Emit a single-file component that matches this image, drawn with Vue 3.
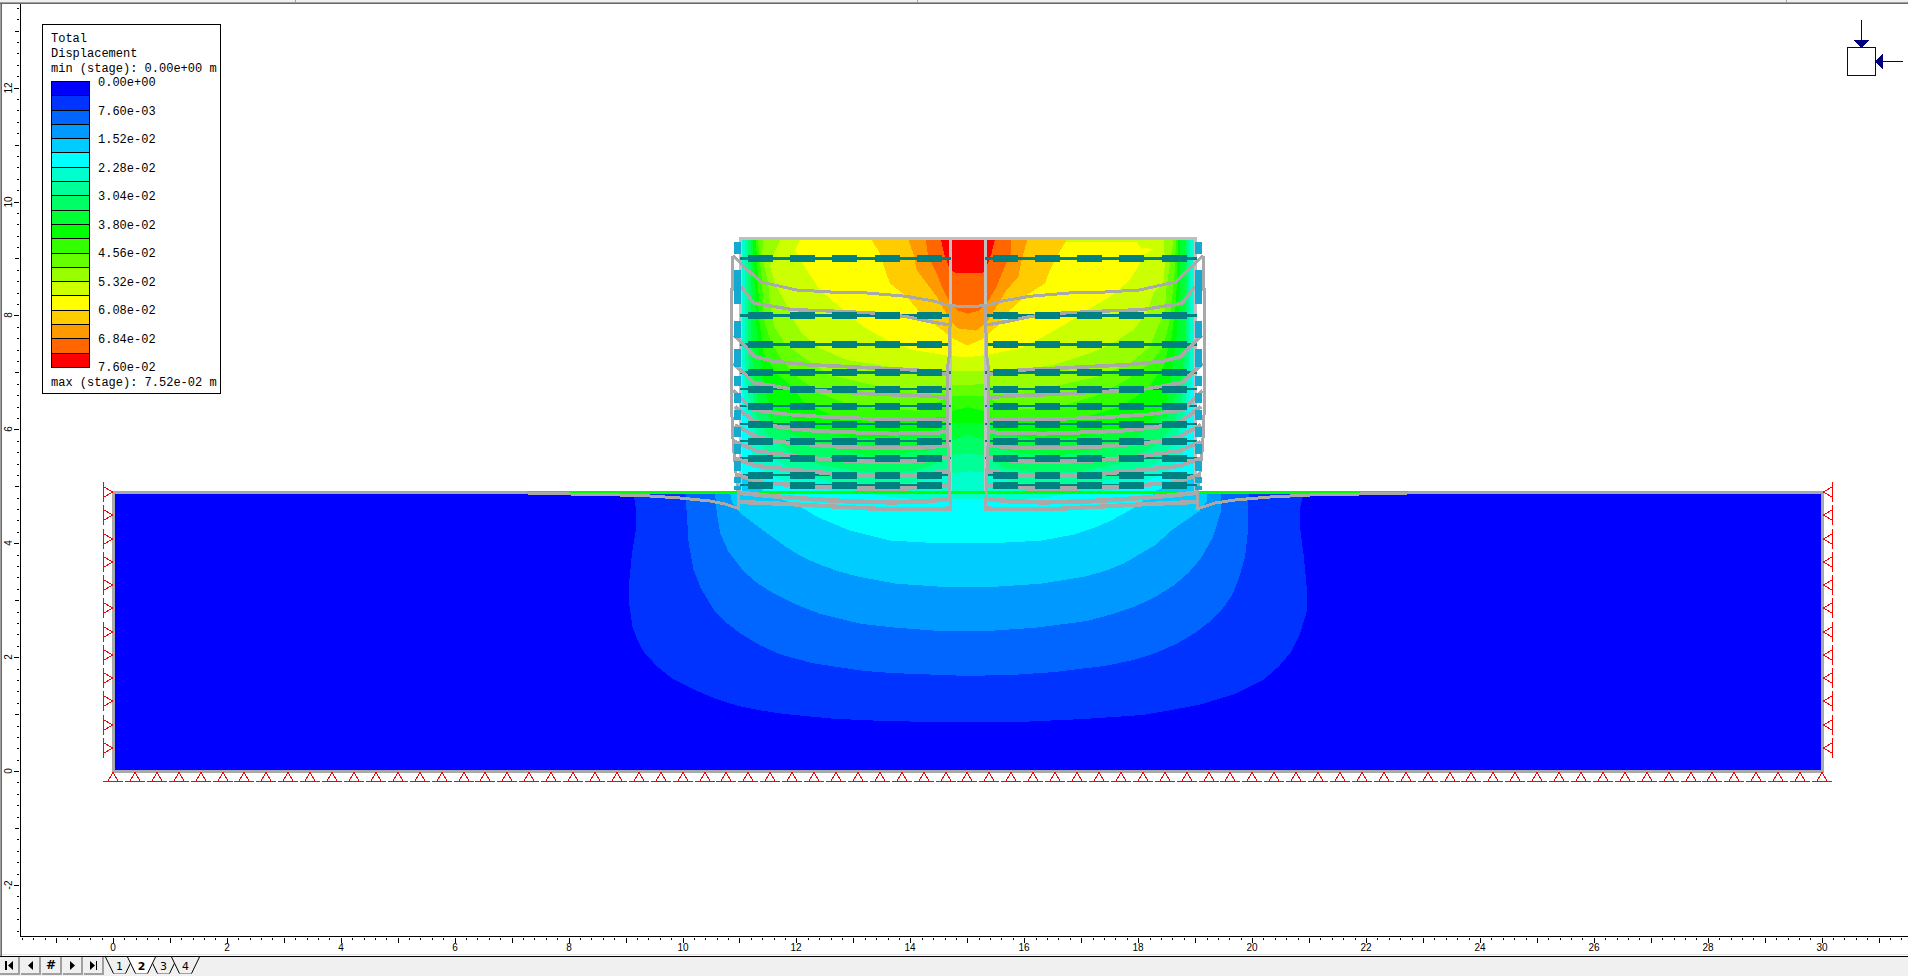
<script setup>
import { ref } from 'vue'

const bands = [
  '#0000ff', '#0033ff', '#0066ff', '#0099ff', '#00ccff', '#00ffff', '#00ffcc',
  '#00ff99', '#00ff66', '#00ff33', '#00ff00', '#33ff00', '#66ff00', '#99ff00',
  '#ccff00', '#ffff00', '#ffcc00', '#ff9900', '#ff6600', '#ff0000'
]
const values = [
  '0.00e+00', '7.60e-03', '1.52e-02', '2.28e-02', '3.04e-02', '3.80e-02',
  '4.56e-02', '5.32e-02', '6.08e-02', '6.84e-02', '7.60e-02'
]

const range = (from, to) => Array.from({ length: to - from + 1 }, (_, i) => from + i)

/* world units to canvas units */
const unit = 56.96
const originX = 113.4
const originY = 771.6
const px = (v) => Math.round(originX + v * unit - 0.5)
const py = (v) => Math.round(originY - v * unit - 0.5)
const ticksX = range(-8, 157).map((k) => ({ k, at: px(k / 5), len: k % 5 ? 2 : 5 }))
const ticksY = range(-14, 67).map((k) => ({ k, at: py(k / 5), len: k % 5 ? 2 : k % 10 ? 4 : 5 }))
const labelsX = range(0, 15).map((n) => n * 2)
const labelsY = range(-1, 6).map((n) => n * 2)

const rollersX = range(0, 78).map((k) => Math.round(113 + k * 21.91))
const rollersY = range(0, 11).map((k) => Math.round(492 + k * 23.27))

/* displacement contours below ground */
const ground = [
  { fill: '#0033ff', pts: '68,67 75,120 74,180 66,250 60,340 60,400 67,470 77,510 90,545 118,590 150,627 200,663 240,687 285,708 330,721 380,732 480,746 570,752 650,755 880,755 1000,747 1120,735 1180,720 1240,703 1310,672 1370,628 1400,590 1425,548 1443,497 1458,425 1458,350 1452,260 1445,180 1445,110 1452,67' },
  { fill: '#0066ff', pts: '176,67 179,130 183,220 193,300 208,355 235,420 262,460 292,493 330,526 375,555 440,580 540,602 600,609 670,613 760,618 860,614 940,606 1045,587 1100,570 1145,550 1190,521 1230,487 1262,450 1288,410 1305,372 1317,330 1331,260 1337,180 1337,90 1340,67' },
  { fill: '#0099ff', pts: '237,67 241,130 248,190 265,245 297,305 325,340 360,372 405,404 455,432 540,462 610,473 700,483 800,483 900,473 1005,453 1058,432 1105,409 1148,379 1185,345 1215,307 1240,265 1265,200 1282,120 1282,67' },
  { fill: '#00ccff', pts: '268,67 272,95 290,130 340,185 385,232 415,259 450,282 490,303 530,319 610,341 700,350 820,350 910,341 1000,320 1042,303 1080,281 1145,226 1180,180 1235,125 1252,95 1252,67' },
  { fill: '#00ffff', pts: '345,67 370,85 398,100 425,120 450,142 480,160 510,179 545,192 600,212 690,219 830,218 910,212 980,193 1015,176 1050,155 1100,115 1130,80 1150,67' }
]

/* displacement contours inside the reinforced wall */
const wall = [
  { fill: '#00ffcc', pts: '66,60 66,400 72,560 85,600 90,680 110,740 180,780 340,812 454,822 520,832 585,837 905,837 980,832 1040,822 1200,810 1340,760 1390,700 1400,600 1420,450 1420,60' },
  { fill: '#00ff99', pts: '75,60 75,400 80,500 95,590 115,660 150,710 250,765 340,785 450,795 560,790 665,770 700,760 744,754 800,757 830,770 900,790 1050,795 1200,775 1310,730 1370,660 1395,560 1410,400 1410,60' },
  { fill: '#00ff66', pts: '83,60 83,400 95,500 110,590 140,640 200,690 300,735 400,752 500,760 600,750 665,725 700,705 744,698 800,708 850,745 960,760 1080,755 1200,730 1300,680 1360,620 1385,540 1403,400 1403,60' },
  { fill: '#00ff33', pts: '92,60 95,400 105,500 120,560 170,620 260,660 350,690 440,705 540,700 640,690 695,662 744,645 795,660 820,680 900,700 1020,705 1150,690 1250,650 1340,590 1380,500 1395,400 1395,60' },
  { fill: '#00ff00', pts: '98,60 102,150 108,300 115,400 125,440 130,500 150,560 230,600 330,640 400,655 520,650 620,640 691,609 796,609 850,640 950,655 1080,650 1200,630 1300,600 1340,540 1365,400 1375,300 1380,200 1380,60' },
  { fill: '#33ff00', pts: '108,60 115,200 118,300 130,400 170,460 215,500 250,545 340,590 450,605 560,600 680,590 700,572 744,562 790,572 820,600 950,605 1100,590 1200,560 1280,510 1330,440 1355,350 1368,250 1372,150 1374,60' },
  { fill: '#66ff00', pts: '114,60 127,200 130,290 150,360 185,420 230,470 300,520 380,550 500,570 600,572 691,528 796,528 870,570 1000,565 1120,530 1220,480 1290,430 1330,380 1348,310 1355,250 1365,150 1368,60' },
  { fill: '#99ff00', pts: '130,60 126,110 145,190 150,250 163,320 195,370 260,420 330,465 480,500 600,515 691,495 796,493 880,515 1000,500 1130,470 1230,430 1290,380 1310,330 1335,270 1340,200 1352,120 1360,60' },
  { fill: '#ccff00', pts: '181,60 162,100 150,140 165,190 200,255 220,300 245,340 300,385 380,420 550,447 691,452 796,453 900,450 1000,435 1110,400 1180,370 1240,330 1280,280 1300,220 1330,190 1335,130 1332,60' },
  { fill: '#ffff00', pts: '240,60 225,90 260,150 300,210 370,270 430,320 500,360 580,390 691,408 744,412 800,405 900,385 970,350 1040,310 1110,265 1170,230 1230,180 1260,130 1272,104 1299,88 1282,84 1265,86 1250,66' },
  { fill: '#ffcc00', pts: '455,60 480,100 495,150 510,190 560,230 610,290 660,325 700,357 744,377 790,355 830,320 870,270 920,225 975,190 990,150 1010,110 1040,60' },
  { fill: '#ff9900', pts: '565,60 580,100 590,150 620,190 650,230 690,300 712,325 768,332 785,320 805,300 835,250 860,210 895,170 905,120 922,60' },
  { fill: '#ff6600', pts: '617,60 625,110 650,160 670,210 691,250 715,272 744,281 775,273 800,250 830,200 850,150 873,100 873,60' },
  { fill: '#ff0000', pts: '663,60 672,100 690,150 705,158 790,158 800,140 815,100 824,60' }
]

const bulkLines = [
  { w: 9, pts: '38,107 122,186 230,210 330,216 440,219 560,229 640,243 691,257 744,260' },
  { w: 10, pts: '63,200 102,250 220,269 330,273 460,279 560,290 625,304 690,315' },
  { w: 11, pts: '43,345 105,410 160,424 260,434 460,444 590,450 685,463' },
  { w: 11, pts: '40,430 102,488 200,505 320,514 480,523 600,527 685,532' },
  { w: 11, pts: '40,512 100,570 200,583 330,592 500,598 685,600' },
  { w: 12, pts: '45,560 105,605 180,622 290,633 420,638 520,641 685,637' },
  { w: 12, pts: '45,615 110,650 180,666 330,679 460,684 600,684 685,676' },
  { w: 12, pts: '45,665 110,693 250,712 400,724 520,726 600,724 685,712' },
  { w: 13, pts: '45,715 110,738 260,754 400,766 520,770 600,766 685,752' },
  { w: 13, pts: '50,765 130,788 280,800 430,806 560,806 690,795' },
  { w: 14, pts: '55,818 150,828 280,838 400,845 520,847 620,844 695,836' },
  { w: 13, pts: '58,846 200,852 350,860 480,867 695,866' },
  { w: 9, pts: '38,107 38,210 34,210 34,545 40,680 45,725 50,780 55,820 57,870' },
  { w: 9, pts: '691,257 689,400 683,440 682,640 686,720 691,866' }
]

const gridRows = [115, 287, 373, 457, 508, 560, 613, 664, 715, 767, 797]
const gridBars = [84, 210, 336, 465, 591, 819, 945, 1071, 1197, 1326]
const facing = [
  [66, 36], [150, 102], [303, 51], [387, 54], [468, 30], [519, 30],
  [570, 30], [621, 30], [672, 30], [723, 30], [771, 18], [798, 12]
]

const tabs = [1, 2, 3, 4]
const active = ref(2)
const navButtons = [
  { name: 'First stage', d: 'M5 4h2v9h-2zM13 4v9l-5-4.5z' },
  { name: 'Previous stage', d: 'M12 4v9l-5-4.5z' },
  { name: 'Go to stage', d: '' },
  { name: 'Next stage', d: 'M7 4v9l5-4.5z' },
  { name: 'Last stage', d: 'M6 4v9l5-4.5zM12 4h1v9h-1z' }
]
</script>

<template>
  <div class="window">
    <div class="header-strip">
      <span class="cell first"></span>
      <span class="cell second"></span>
      <span class="cell third"></span>
      <span class="cell"></span>
    </div>

    <main class="canvas">
      <svg class="drawing" viewBox="2 4 1906 952" preserveAspectRatio="xMinYMin meet" role="img" aria-label="Total displacement contours">
        <g class="crisp">
          <rect x="2" y="954" width="1906" height="1" fill="#e3e3e3" />
          <rect x="20" y="4" width="1" height="933" />
          <rect x="20" y="936" width="1888" height="1" />
          <rect v-for="t in ticksX" :key="'x' + t.k" :x="t.at" y="938" width="1" :height="t.len" />
          <rect v-for="t in ticksY" :key="'y' + t.k" :x="19 - t.len" :y="t.at" :width="t.len" height="1" />
        </g>
        <g class="ruler-text">
          <text v-for="n in labelsX" :key="'lx' + n" :x="px(n)" y="951">{{ n }}</text>
          <text v-for="n in labelsY" :key="'ly' + n" :transform="`translate(12 ${py(n)}) rotate(-90)`">{{ n }}</text>
        </g>

        <g class="crisp">
          <rect x="113" y="492" width="1709" height="279" fill="#0000ff" />
          <g transform="translate(600 470) scale(0.4847 0.3333)">
            <polygon v-for="c in ground" :key="c.fill" :points="c.pts" :fill="c.fill" />
          </g>
          <path d="M112 491h1712v3h-1712zM112 770h1712v3h-1712zM112 491h3v282h-3zM1821 491h3v282h-3z" fill="#a9a9a9" />

          <g transform="translate(720 220) scale(0.3333)">
            <rect x="61" y="57" width="1366" height="762" fill="#00ffff" />
            <polygon points="61,770 110,790 135,820 61,820" fill="#00ccff" />
            <polygon points="1427,760 1370,785 1290,820 1427,820" fill="#00ccff" />
            <polygon v-for="c in wall" :key="c.fill" :points="c.pts" :fill="c.fill" />
            <path d="M62 819V56H1427V819M691 56V819M796 56V819" class="frame" />
          </g>
          <rect x="527" y="491" width="881" height="3" fill="#00ff00" />
          <g class="gray">
            <polyline stroke-width="3" points="527,493 570,494 620,495 650,496 680,498 710,501 725,504 740,509" />
            <polyline stroke-width="3" points="1408,493 1360,494 1310,495 1270,497 1235,500 1215,503 1197,509" />
          </g>

          <g transform="translate(720 220) scale(0.3333)">
            <g fill="#008080">
              <template v-for="(y, i) in gridRows" :key="y">
                <rect x="60" :y="y - 4" width="633" :height="i < 4 ? 8 : 6" />
                <rect x="795" :y="y - 4" width="635" :height="i < 4 ? 8 : 6" />
              </template>
            </g>
            <g class="gray">
              <polyline v-for="l in bulkLines" :key="l.pts" :points="l.pts" :stroke-width="l.w" />
            </g>
            <g class="gray" transform="translate(1488) scale(-1 1)">
              <polyline v-for="l in bulkLines" :key="l.pts" :points="l.pts" :stroke-width="l.w" />
            </g>
            <g fill="#008080">
              <template v-for="y in gridRows" :key="y">
                <rect v-for="x in gridBars" :key="x" :x="x" :y="y - 10" width="76" height="21" />
              </template>
            </g>
            <g fill="#14aacf">
              <template v-for="f in facing" :key="f[0]">
                <rect x="42" :y="f[0]" width="21" :height="f[1]" />
                <rect x="1425" :y="f[0]" width="21" :height="f[1]" />
              </template>
            </g>
          </g>

          <g class="support">
            <path v-for="x in rollersX" :key="'b' + x" :d="`M${x - 10} 781.5h20M${x - 5} 781L${x} 772.5L${x + 5} 781`" />
            <path v-for="y in rollersY" :key="'l' + y" :d="`M103.500 ${y - 10}v20M104 ${y - 5}L112.500 ${y}L104 ${y + 5}`" />
            <path v-for="y in rollersY" :key="'r' + y" :d="`M1832.500 ${y - 10}v20M1832 ${y - 5}L1823.500 ${y}L1832 ${y + 5}`" />
          </g>

          <g fill="#000080">
            <path d="M1847.500 47.500h28v28h-28z" fill="none" stroke="#000080" />
            <path d="M1861 20h1v20h-1zM1854 40h15l-7 8h-1zM1883 61h20v1h-20zM1883 54v15l-8-7v-1z" />
          </g>
        </g>
      </svg>

      <section class="legend" aria-label="Legend">
        <div class="line">Total</div>
        <div class="line">Displacement</div>
        <div class="line">min (stage): 0.00e+00 m</div>
        <div class="scale">
          <div class="bar">
            <span v-for="b in bands" :key="b" :style="{ background: b }"></span>
          </div>
          <div class="values">
            <span v-for="v in values" :key="v">{{ v }}</span>
          </div>
        </div>
        <div class="line">max (stage): 7.52e-02 m</div>
      </section>
    </main>

    <nav class="tabbar" aria-label="Stages">
      <button v-for="b in navButtons" :key="b.name" class="step" type="button" :aria-label="b.name">
        <svg v-if="b.d" width="18" height="17" viewBox="0 0 18 17"><path :d="b.d" /></svg>
        <template v-else>#</template>
      </button>
      <div class="tabs">
        <button v-for="t in tabs" :key="t" type="button" class="tab" :class="{ active: t === active }" @click="active = t">
          <svg class="tab-shape" width="29" height="18" viewBox="0 0 29 18">
            <path class="face" d="M0 0L8.500 16.500H20.500L29 0z" />
            <path class="base" d="M8.500 16.500H20.500" />
            <path class="edge" d="M0.500 0L8.500 16.500M20.500 16.500L28.500 0" />
          </svg>
          <span class="tab-label">{{ t }}</span>
        </button>
      </div>
    </nav>
  </div>
</template>

<style>
body {
  margin: 0;
  background: #fff;
}
</style>

<style scoped>
.window {
  display: flex;
  flex-direction: column;
  height: 100vh;
  overflow: hidden;
  font-family: "Liberation Sans", Arial, sans-serif;
  color: #000;
}
.header-strip {
  display: flex;
  flex: none;
  box-sizing: border-box;
  height: 4px;
  background: #f0f0f0;
  border-bottom: 1px solid #696969;
  box-shadow: inset 0 -1px #a0a0a0;
}
.cell {
  flex: 1;
}
.first,
.second,
.third {
  box-sizing: border-box;
  border-right: 1px solid #a0a0a0;
}
.first {
  flex: 0 0 296px;
}
.second {
  flex: 0 0 622px;
}
.third {
  flex: 0 0 869px;
}
.canvas {
  position: relative;
  flex: 1;
  min-height: 0;
  border-left: 1px solid #a0a0a0;
  box-shadow: inset 1px 0 #696969;
  padding-left: 1px;
}
.drawing {
  display: block;
  width: 100%;
  height: 100%;
}
.crisp {
  shape-rendering: crispEdges;
}
.ruler-text {
  font-size: 10px;
  text-anchor: middle;
}
.frame {
  fill: none;
  stroke: #c0c0c0;
  stroke-width: 9;
}
.gray {
  fill: none;
  stroke: #a9a9a9;
}
.support {
  fill: none;
  stroke: #f00;
}
.legend {
  position: absolute;
  top: 20px;
  left: 41px;
  box-sizing: border-box;
  width: 179px;
  padding: 7px 0 2px 8px;
  border: 1px solid #000;
  background: #fff;
  font: 12px "Liberation Mono", "Courier New", monospace;
}
.line {
  line-height: 15px;
  white-space: nowrap;
}
.scale {
  display: flex;
  gap: 8px;
  height: 287px;
  margin: 4px 0 8px;
}
.bar {
  display: flex;
  flex-direction: column;
  box-sizing: border-box;
  width: 39px;
  border: 1px solid #000;
}
.bar span {
  flex: 1;
}
.bar span + span {
  border-top: 1px solid #000;
}
.values {
  display: flex;
  flex-direction: column;
  justify-content: space-between;
  margin: -5px 0 -7px;
}
.values span {
  line-height: 14px;
}
.tabbar {
  display: flex;
  flex: none;
  box-sizing: border-box;
  height: 20px;
  border-top: 1px solid #000;
  background: #f0f0f0;
}
.step {
  display: flex;
  align-items: center;
  justify-content: center;
  box-sizing: border-box;
  width: 20px;
  height: 18px;
  margin-right: 1px;
  padding: 0;
  border: 0;
  border-right: 2px solid #a0a0a0;
  border-bottom: 2px solid #a0a0a0;
  background: #f0f0f0;
  color: #000;
  font: bold 12px "DejaVu Sans", sans-serif;
}
.tabs {
  display: flex;
}
.tab {
  position: relative;
  width: 29px;
  height: 18px;
  margin-right: -7px;
  padding: 0;
  border: 0;
  background: none;
  color: #000;
  font: 11px "DejaVu Sans", sans-serif;
}
.tab.active {
  z-index: 1;
  font-weight: bold;
}
.tab-shape {
  position: absolute;
  inset: 0;
}
.tab-label {
  position: relative;
}
.face {
  fill: #f0f0f0;
}
.active .face {
  fill: #fff;
}
.base {
  fill: none;
  stroke: #a0a0a0;
}
.edge {
  fill: none;
  stroke: #000;
}
</style>
